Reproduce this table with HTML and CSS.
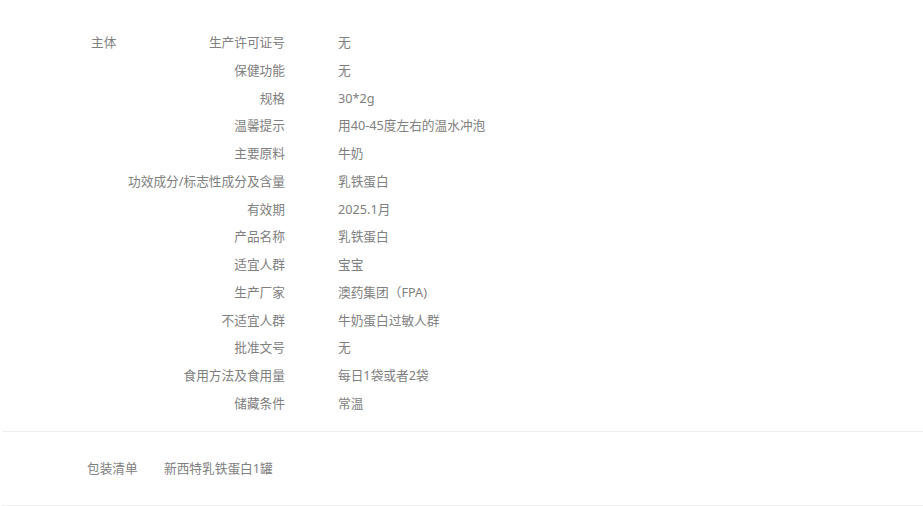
FILE: index.html
```html
<!DOCTYPE html>
<html lang="zh-CN">
<head>
    <meta charset="UTF-8">
    <meta name="viewport" content="width=device-width, initial-scale=1.0">
    <title>规格参数</title>
    <link rel="stylesheet" href="styles.css">
</head>
<body>
    <div class="params">
        <div class="param-group">
            <div class="group-title">主体</div>
            <dl class="param-list">
                <div class="param-row"><dt>生产许可证号</dt><dd>无</dd></div>
                <div class="param-row"><dt>保健功能</dt><dd>无</dd></div>
                <div class="param-row"><dt>规格</dt><dd>30*2g</dd></div>
                <div class="param-row"><dt>温馨提示</dt><dd>用40-45度左右的温水冲泡</dd></div>
                <div class="param-row"><dt>主要原料</dt><dd>牛奶</dd></div>
                <div class="param-row"><dt>功效成分/标志性成分及含量</dt><dd>乳铁蛋白</dd></div>
                <div class="param-row"><dt>有效期</dt><dd>2025.1月</dd></div>
                <div class="param-row"><dt>产品名称</dt><dd>乳铁蛋白</dd></div>
                <div class="param-row"><dt>适宜人群</dt><dd>宝宝</dd></div>
                <div class="param-row"><dt>生产厂家</dt><dd>澳药集团（FPA)</dd></div>
                <div class="param-row"><dt>不适宜人群</dt><dd>牛奶蛋白过敏人群</dd></div>
                <div class="param-row"><dt>批准文号</dt><dd>无</dd></div>
                <div class="param-row"><dt>食用方法及食用量</dt><dd>每日1袋或者2袋</dd></div>
                <div class="param-row"><dt>储藏条件</dt><dd>常温</dd></div>
            </dl>
        </div>
        <div class="package">
            <span class="package-title">包装清单</span>
            <span class="package-list">新西特乳铁蛋白1罐</span>
        </div>
    </div>
</body>
</html>
```

FILE: styles.css
```css
body {
    margin: 0;
    font-family: Tahoma, "Noto Sans", "Noto Sans CJK SC", sans-serif;
    font-size: 12.7px;
    color: #808080;
    background-color: #fff;
}
.params {
    padding-top: 29px;
    margin-left: 2px;
}
.param-group {
    display: flex;
    padding-left: 89px;
    padding-bottom: 13px;
    border-bottom: 1px solid #eee;
}
.group-title {
    width: 0;
    white-space: nowrap;
    line-height: 27.75px;
}
.param-list {
    margin: 0;
}
.param-row {
    display: flex;
    line-height: 27.75px;
}
.param-row dt {
    width: 194px;
    text-align: right;
    white-space: nowrap;
}
.param-row dd {
    margin: 0 0 0 53px;
    white-space: nowrap;
}
.package {
    display: flex;
    padding: 22px 0 23px 85px;
    line-height: 28px;
    border-bottom: 1px solid #eee;
}
.package-title {
    width: 77px;
}
```
